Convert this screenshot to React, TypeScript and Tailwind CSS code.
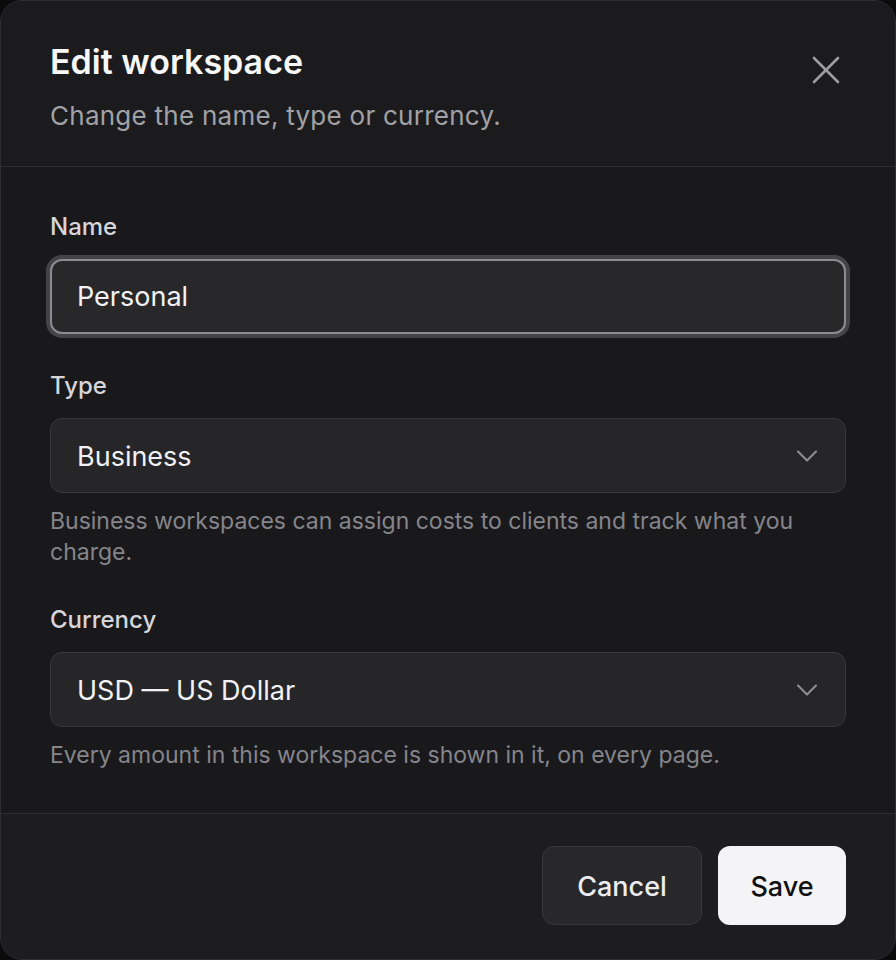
import { ChevronDown, X } from 'lucide-react';

const font = { fontFamily: 'Inter, "Noto Sans", sans-serif' };

function Field({
  label,
  children,
  hint,
}: {
  label: string;
  children: React.ReactNode;
  hint?: string;
}) {
  return (
    <div className="flex flex-col">
      <label className="text-[24px] leading-[32px] font-medium text-[#d6d6da]">
        {label}
      </label>
      <div className="mt-[16px]">{children}</div>
      {hint ? (
        <p className="mt-[13px] text-[23px] leading-[31px] text-[#85858b]">{hint}</p>
      ) : null}
    </div>
  );
}

function SelectBox({ value }: { value: string }) {
  return (
    <div className="flex h-[75px] items-center justify-between rounded-[12px] border border-[#38383c] bg-[#262629] pl-[26px] pr-[20px]">
      <span className="pt-[4px] text-[27px] text-[#f2f2f4]">{value}</span>
      <ChevronDown className="h-[36px] w-[36px] text-[#8e8e93]" strokeWidth={1.4} />
    </div>
  );
}

export default function App() {
  return (
    <div className="h-[960px] w-full bg-[#0b0b0c]" style={font}>
      <div className="flex h-full w-full flex-col overflow-hidden rounded-[22px] border border-[#2e2e32] bg-[#19191c]">
        {/* header */}
        <div className="flex items-start justify-between border-b border-[#2e2e32] bg-[#1b1b1e] pl-[49px] pr-[45px] pt-[41px] pb-[33px]">
          <div>
            <h1 className="text-[34px] leading-[40px] font-semibold text-[#f7f7f8]">
              Edit workspace
            </h1>
            <p className="mt-[17px] text-[26px] leading-[34px] tracking-[0.01em] text-[#a1a1a6]">
              Change the name, type or currency.
            </p>
          </div>
          <button type="button" className="mt-[4px] text-[#9d9da2]">
            <X className="h-[48px] w-[48px]" strokeWidth={1.3} />
          </button>
        </div>

        {/* body */}
        <div className="flex flex-1 flex-col gap-[36px] px-[49px] pt-[44px]">
          <Field label="Name">
            <div className="flex h-[75px] items-center rounded-[12px] border-2 border-[#8c8c91] bg-[#28282b] px-[25px] shadow-[0_0_0_4px_#444448]">
              <span className="pt-[2px] text-[27px] text-[#f2f2f4]">Personal</span>
            </div>
          </Field>

          <Field
            label="Type"
            hint="Business workspaces can assign costs to clients and track what you charge."
          >
            <SelectBox value="Business" />
          </Field>

          <Field
            label="Currency"
            hint="Every amount in this workspace is shown in it, on every page."
          >
            <SelectBox value="USD — US Dollar" />
          </Field>
        </div>

        {/* footer */}
        <div className="flex justify-end gap-[16px] border-t border-[#2e2e32] bg-[#1d1d20] px-[49px] pt-[32px] pb-[34px]">
          <button
            type="button"
            className="h-[79px] w-[160px] rounded-[12px] border border-[#38383c] bg-[#28282b] pt-[3px] text-[27px] font-medium text-[#ededf0]"
          >
            Cancel
          </button>
          <button
            type="button"
            className="h-[79px] w-[128px] rounded-[12px] bg-[#f4f4f6] pt-[3px] text-[27px] font-medium text-[#111113]"
          >
            Save
          </button>
        </div>
      </div>
    </div>
  );
}
